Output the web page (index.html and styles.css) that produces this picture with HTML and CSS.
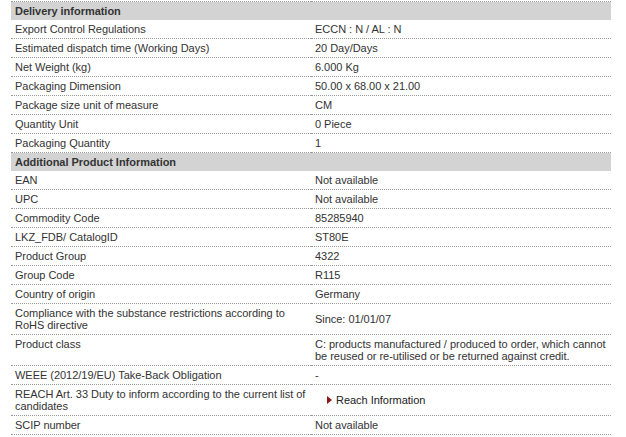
FILE: index.html
```html
<!DOCTYPE html>
<html>
<head>
<meta charset="utf-8">
<link rel="stylesheet" href="styles.css">
</head>
<body>
<div class="wrap">
<table class="info">
  <tr class="head"><td colspan="2">Delivery information</td></tr>
  <tr><td>Export Control Regulations</td><td>ECCN : N / AL : N</td></tr>
  <tr><td>Estimated dispatch time (Working Days)</td><td>20 Day/Days</td></tr>
  <tr><td>Net Weight (kg)</td><td>6.000 Kg</td></tr>
  <tr><td>Packaging Dimension</td><td>50.00 x 68.00 x 21.00</td></tr>
  <tr><td>Package size unit of measure</td><td>CM</td></tr>
  <tr><td>Quantity Unit</td><td>0 Piece</td></tr>
  <tr><td>Packaging Quantity</td><td>1</td></tr>
  <tr class="head"><td colspan="2">Additional Product Information</td></tr>
  <tr><td>EAN</td><td>Not available</td></tr>
  <tr><td>UPC</td><td>Not available</td></tr>
  <tr><td>Commodity Code</td><td>85285940</td></tr>
  <tr><td>LKZ_FDB/ CatalogID</td><td>ST80E</td></tr>
  <tr><td>Product Group</td><td>4322</td></tr>
  <tr><td>Group Code</td><td>R115</td></tr>
  <tr><td>Country of origin</td><td>Germany</td></tr>
  <tr><td>Compliance with the substance restrictions according to RoHS directive</td><td>Since: 01/01/07</td></tr>
  <tr class="top"><td>Product class</td><td>C: products manufactured / produced to order, which cannot be reused or re-utilised or be returned against credit.</td></tr>
  <tr><td>WEEE (2012/19/EU) Take-Back Obligation</td><td>-</td></tr>
  <tr><td>REACH Art. 33 Duty to inform according to the current list of candidates</td><td><span class="link"><span class="arrow"></span>Reach Information</span></td></tr>
  <tr><td>SCIP number</td><td>Not available</td></tr>
</table>
</div>
</body>
</html>
```
FILE: styles.css
```css
html, body {
  margin: 0;
  padding: 0;
  background: #fff;
}
.wrap {
  padding: 1px 15px 0 11px;
}
.info {
  width: 600px;
  border-collapse: collapse;
  border-top: 1px dotted #9a9a9a;
  font-family: "Liberation Sans", Arial, sans-serif;
  font-size: 11px;
  line-height: 12px;
  color: #333;
  table-layout: fixed;
  letter-spacing: -0.03px;
}
.info td {
  width: 50%;
  padding: 3px 0 3px 4px;
  vertical-align: middle;
  border-bottom: 1px dotted #9a9a9a;
}
.info tr.head td {
  background: #d3d3d3;
  font-weight: bold;
  border-bottom: none;
  padding: 3px 0 3px 4px;
}
.info tr.top td {
  vertical-align: top;
}
.link {
  display: inline-flex;
  align-items: center;
  padding-left: 12px;
  color: #222;
}
.arrow {
  display: inline-block;
  width: 0;
  height: 0;
  border-top: 4px solid transparent;
  border-bottom: 4px solid transparent;
  border-left: 5px solid #8b1616;
  margin-right: 4px;
}
```
